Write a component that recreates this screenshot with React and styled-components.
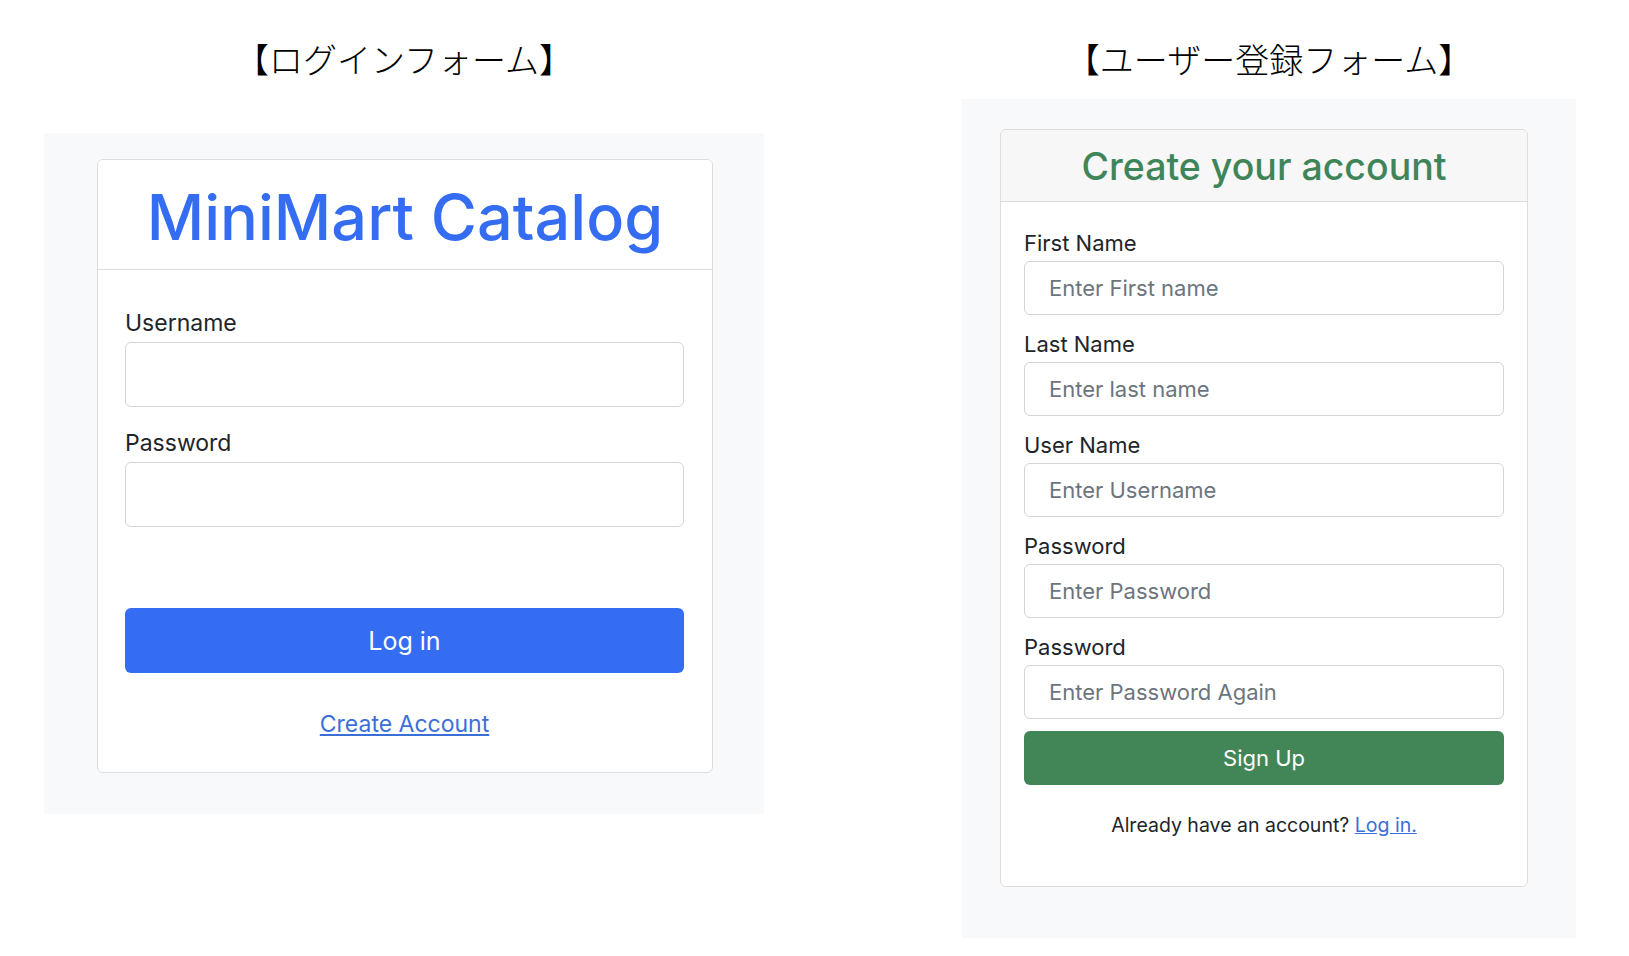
import React from 'react'
import styled, { createGlobalStyle } from 'styled-components'

const GlobalStyle = createGlobalStyle`
  body {
    margin: 0;
    background: #ffffff;
    font-family: Inter, "Noto Sans", "Liberation Sans", sans-serif;
    color: #212529;
  }
  * { box-sizing: border-box; }
`

function LoginForm() {
  return (
    <Card>
      <CardHeader $height={110}>
        <BrandTitle>MiniMart Catalog</BrandTitle>
      </CardHeader>
      <LoginBody>
        <Field $gap={19}>
          <Label $size={23}>Username</Label>
          <Input $height={65} type="text" />
        </Field>
        <Field $gap={81}>
          <Label $size={23}>Password</Label>
          <Input $height={65} type="password" />
        </Field>
        <Button $color="#346df2" $height={65} $size={25}>Log in</Button>
        <LinkRow $size={23} $top={34}>
          <TextLink href="#">Create Account</TextLink>
        </LinkRow>
      </LoginBody>
    </Card>
  )
}

const signupFields = [
  { label: 'First Name', placeholder: 'Enter First name', type: 'text' },
  { label: 'Last Name', placeholder: 'Enter last name', type: 'text' },
  { label: 'User Name', placeholder: 'Enter Username', type: 'text' },
  { label: 'Password', placeholder: 'Enter Password', type: 'password' },
  { label: 'Password', placeholder: 'Enter Password Again', type: 'password' },
]

function SignupForm() {
  return (
    <Card>
      <CardHeader $height={72} $bg="#f7f7f7">
        <SignupTitle>Create your account</SignupTitle>
      </CardHeader>
      <SignupBody>
        {signupFields.map((f, i) => (
          <Field key={i} $gap={i === signupFields.length - 1 ? 12 : 13}>
            <Label $size={22}>{f.label}</Label>
            <Input $height={54} type={f.type} placeholder={f.placeholder} />
          </Field>
        ))}
        <Button $color="#428658" $height={54} $size={22}>Sign Up</Button>
        <LinkRow $size={19.5} $top={26}>
          Already have an account? <TextLink href="#">Log in.</TextLink>
        </LinkRow>
      </SignupBody>
    </Card>
  )
}

export default function App() {
  return (
    <>
      <GlobalStyle />
      <Page>
        <Column $width={720}>
          <Heading>【ログインフォーム】</Heading>
          <Panel $top={54} $pad="26px 51px 41px 53px">
            <LoginForm />
          </Panel>
        </Column>
        <Column $width={614}>
          <Heading>【ユーザー登録フォーム】</Heading>
          <Panel $top={20} $pad="30px 48px 51px 38px">
            <SignupForm />
          </Panel>
        </Column>
      </Page>
    </>
  )
}

const Page = styled.div`
  display: flex;
  align-items: flex-start;
  gap: 198px;
  padding-left: 44px;
`

const Column = styled.div`
  display: flex;
  flex-direction: column;
  width: ${p => p.$width}px;
`

const Heading = styled.h2`
  margin: 39px 0 0;
  height: 40px;
  line-height: 40px;
  text-align: center;
  font-family: "Noto Sans CJK JP", sans-serif;
  font-weight: 300;
  font-size: 34px;
  color: #000;
`

const Panel = styled.div`
  margin-top: ${p => p.$top}px;
  background: #f8f9fa;
  padding: ${p => p.$pad};
`

const Card = styled.div`
  background: #fff;
  border: 1px solid #dcdddf;
  border-radius: 6px;
  overflow: hidden;
`

const CardHeader = styled.div`
  height: ${p => p.$height}px;
  display: flex;
  align-items: center;
  justify-content: center;
  background: ${p => p.$bg || '#fff'};
  border-bottom: 1px solid #dcdddf;
`

const BrandTitle = styled.h1`
  margin: 6px 0 0;
  font-size: 63px;
  font-weight: 500;
  line-height: 1.2;
  color: #346df2;
`

const SignupTitle = styled.h1`
  margin: 2px 0 0;
  font-size: 37.5px;
  font-weight: 500;
  line-height: 1.2;
  color: #3f855a;
`

const LoginBody = styled.div`
  display: flex;
  flex-direction: column;
  padding: 36px 28px 30px 27px;
`

const SignupBody = styled.div`
  display: flex;
  flex-direction: column;
  padding: 25px 23px 46px;
`

const Field = styled.div`
  display: flex;
  flex-direction: column;
  margin-bottom: ${p => p.$gap}px;
`

const Label = styled.label`
  font-size: ${p => p.$size}px;
  line-height: ${p => Math.round(p.$size * 1.5)}px;
  margin-bottom: 1px;
  color: #212529;
`

const Input = styled.input`
  height: ${p => p.$height}px;
  width: 100%;
  border: 1px solid #d2d4d7;
  border-radius: 6px;
  padding: 0 24px;
  font-family: inherit;
  font-size: 22px;
  color: #212529;
  background: #fff;
  outline: none;
  &::placeholder {
    color: #6c757d;
  }
`

const Button = styled.button`
  height: ${p => p.$height}px;
  width: 100%;
  border: none;
  border-radius: 6px;
  background: ${p => p.$color};
  color: #fff;
  font-family: inherit;
  font-size: ${p => p.$size}px;
  cursor: pointer;
`

const LinkRow = styled.div`
  margin-top: ${p => p.$top}px;
  text-align: center;
  font-size: ${p => p.$size}px;
  line-height: ${p => Math.round(p.$size * 1.5)}px;
  color: #212529;
`

const TextLink = styled.a`
  color: #3a6fd8;
  text-decoration: underline;
`
